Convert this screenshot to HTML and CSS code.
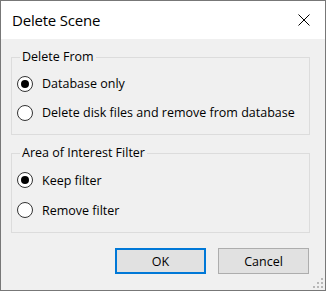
FILE: index.html
```html
<!DOCTYPE html>
<html lang="en">
<head>
    <meta charset="UTF-8">
    <meta name="viewport" content="width=device-width, initial-scale=1.0">
    <title>Delete Scene</title>
    <link rel="stylesheet" href="styles.css">
</head>
<body>

<div class="window">
    <div class="titlebar">
        <span class="title">Delete Scene</span>
        <span class="close-button">
            <svg width="12" height="12" viewBox="0 0 12 12"><path d="M0.5 0.5 L11.5 11.5 M11.5 0.5 L0.5 11.5" stroke="#000" stroke-width="1" fill="none"/></svg>
        </span>
    </div>

    <div class="client">
        <fieldset class="group">
            <legend>Delete From</legend>
            <label class="radio-row"><span class="radio checked"></span>Database only</label>
            <label class="radio-row"><span class="radio"></span>Delete disk files and remove from database</label>
        </fieldset>

        <fieldset class="group group-filter">
            <legend>Area of Interest Filter</legend>
            <label class="radio-row"><span class="radio checked"></span>Keep filter</label>
            <label class="radio-row"><span class="radio"></span>Remove filter</label>
        </fieldset>

        <div class="button-row">
            <button class="dialog-button default-button">OK</button>
            <button class="dialog-button">Cancel</button>
        </div>

        <svg class="size-grip" width="10" height="10" viewBox="0 0 10 10">
            <rect x="8" y="0" width="2" height="2" fill="#b8b8b8"/>
            <rect x="4" y="4" width="2" height="2" fill="#b8b8b8"/>
            <rect x="8" y="4" width="2" height="2" fill="#b8b8b8"/>
            <rect x="0" y="8" width="2" height="2" fill="#b8b8b8"/>
            <rect x="4" y="8" width="2" height="2" fill="#b8b8b8"/>
            <rect x="8" y="8" width="2" height="2" fill="#b8b8b8"/>
        </svg>
    </div>
</div>

</body>
</html>
```

FILE: styles.css
```css
body { margin: 0; font-family: "Open Sans", "Noto Sans", sans-serif; color: #000; background: #fff; }
.window { width: 326px; height: 291px; box-sizing: border-box; border: 1px solid #777; display: flex; flex-direction: column; }
.titlebar { height: 38px; background: #fff; display: flex; align-items: center; justify-content: space-between; padding: 0 15px 0 11px; }
.title { font-size: 15px; letter-spacing: -0.2px; }
.close-button { display: flex; width: 12px; height: 12px; }
.client { flex: 1; background: #f0f0f0; padding: 0 15px 0 10px; position: relative; }
.group { margin: 10px 0 0 0; padding: 0 0 7px 0; border: 1px solid #dcdcdc; min-width: 0; }
.group legend { margin-left: 8px; padding: 0 2px; font-size: 12.5px; line-height: 16px; }
.radio-row { display: flex; align-items: center; height: 29px; margin-left: 5px; font-size: 12.5px; }
.group .radio-row:first-of-type { margin-top: 4px; }
.group-filter .radio-row { height: 30px; }
.radio { width: 14px; height: 14px; border: 1px solid #333; border-radius: 50%; background: #fff; margin-right: 9px; position: relative; }
.radio.checked::after { content: ""; position: absolute; left: 3px; top: 3px; width: 8px; height: 8px; border-radius: 50%; background: #000; }
.button-row { display: flex; justify-content: flex-end; gap: 12px; margin-top: 15px; padding-right: 1px; }
.dialog-button { width: 91px; height: 26px; background: #e1e1e1; border: 1px solid #adadad; font-family: inherit; font-size: 12.5px; color: #000; padding: 0; }
.default-button { border: 2px solid #0078d7; }
.size-grip { position: absolute; right: 2px; bottom: 2px; }
```
